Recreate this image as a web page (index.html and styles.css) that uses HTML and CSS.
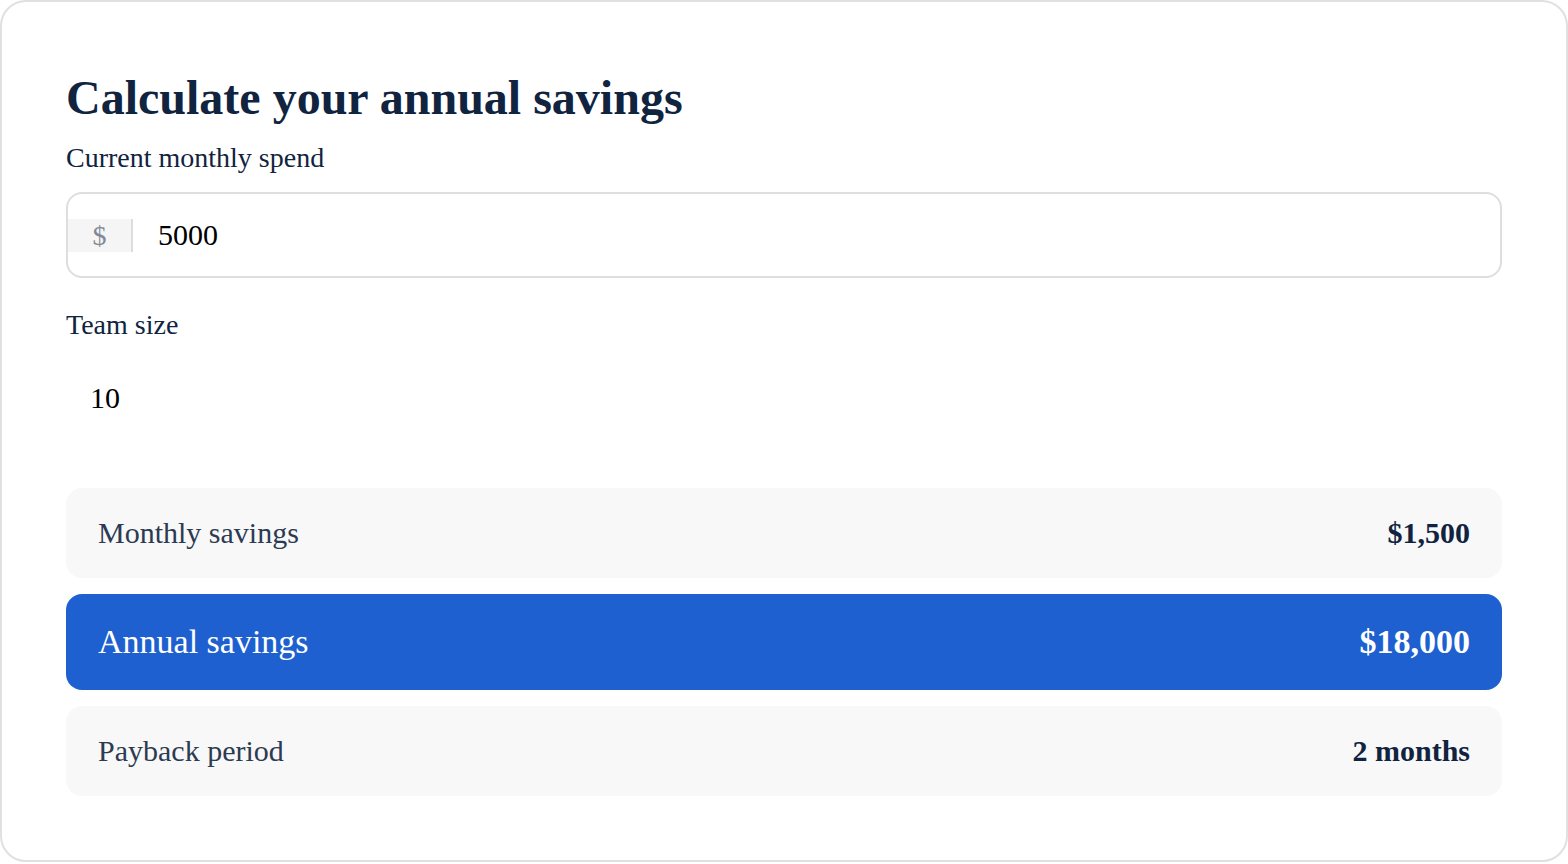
FILE: index.html
```html
<!DOCTYPE html>
<html>
<head>
<meta charset="utf-8">
<link rel="stylesheet" href="styles.css">
</head>
<body>
<div class="card">
  <h1 class="title">Calculate your annual savings</h1>
  <div class="field field-first">
    <label class="label">Current monthly spend</label>
    <div class="input-box">
      <span class="prefix">$</span>
      <span class="value">5000</span>
    </div>
  </div>
  <div class="field">
    <label class="label">Team size</label>
    <div class="plain-value">10</div>
  </div>
  <div class="results">
    <div class="row">
      <span class="row-label">Monthly savings</span>
      <span class="row-value">$1,500</span>
    </div>
    <div class="row row-primary">
      <span class="row-label">Annual savings</span>
      <span class="row-value">$18,000</span>
    </div>
    <div class="row">
      <span class="row-label">Payback period</span>
      <span class="row-value">2 months</span>
    </div>
  </div>
</div>
</body>
</html>
```
FILE: styles.css
```css
html, body {
  margin: 0;
  padding: 0;
  background: #ffffff;
}
body {
  font-family: "Liberation Serif", "Times New Roman", serif;
  color: #10233f;
}
.card {
  box-sizing: border-box;
  width: 1568px;
  height: 862px;
  border: 2px solid #e0e0e0;
  border-radius: 26px;
  padding: 64px 64px 0 64px;
}
.title {
  margin: 0;
  font-size: 48px;
  font-weight: bold;
  line-height: 64px;
  color: #10233f;
}
.field {
  display: flex;
  flex-direction: column;
}
.field-first {
  margin-top: 12px;
}
.label {
  font-size: 28px;
  line-height: 32px;
  color: #10233f;
}
.input-box {
  margin-top: 18px;
  height: 86px;
  box-sizing: border-box;
  border: 2px solid #dedede;
  border-radius: 16px;
  display: flex;
  align-items: center;
}
.prefix {
  width: 65px;
  height: 33px;
  box-sizing: border-box;
  background: #f5f5f5;
  border-right: 2px solid #dddddd;
  color: #808a96;
  font-size: 28px;
  line-height: 33px;
  text-align: center;
}
.value {
  margin-left: 25px;
  font-size: 30px;
  color: #000;
}
.field + .field {
  margin-top: 31px;
}
.plain-value {
  font-size: 30px;
  color: #000;
  padding: 41px 0 0 24px;
  line-height: 32px;
}
.results {
  margin-top: 74px;
  display: flex;
  flex-direction: column;
  gap: 16px;
}
.row {
  height: 90px;
  box-sizing: border-box;
  background: #f8f8f8;
  border-radius: 16px;
  padding: 0 32px;
  display: flex;
  align-items: center;
  justify-content: space-between;
}
.row-label {
  font-size: 30px;
  color: #2c3b52;
}
.row-value {
  font-size: 30px;
  font-weight: bold;
  color: #10233f;
}
.row-primary {
  height: 96px;
  background: #1e60d0;
}
.row-primary .row-label {
  color: #ffffff;
  font-size: 34px;
}
.row-primary .row-value {
  color: #ffffff;
  font-size: 34px;
}
```
